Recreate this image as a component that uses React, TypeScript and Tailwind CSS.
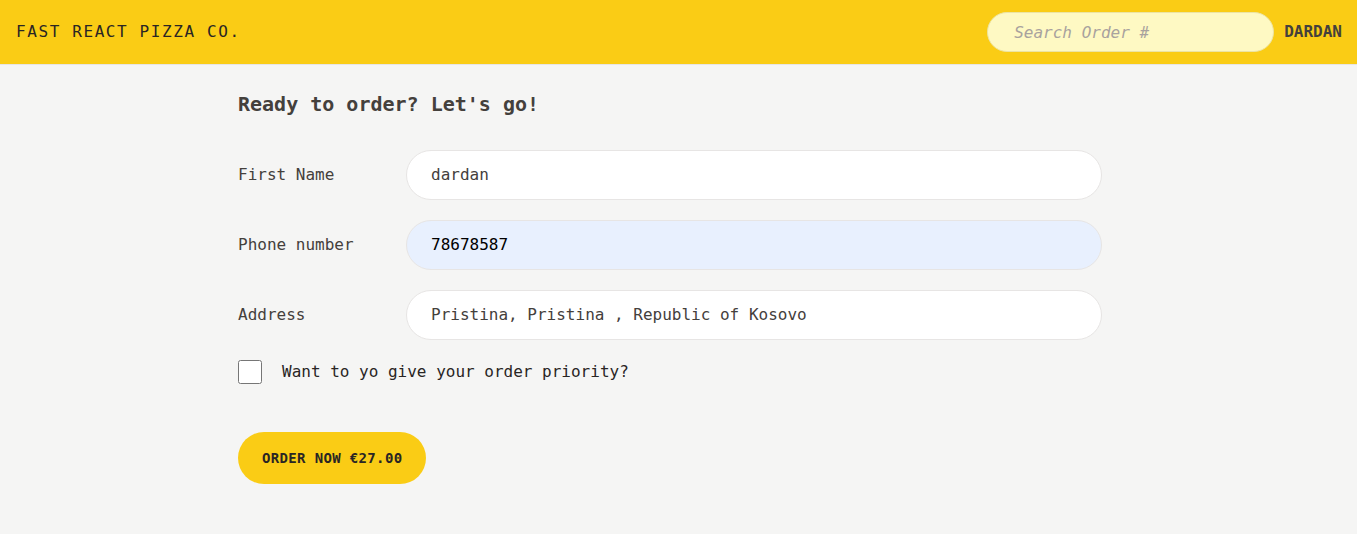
const mono = { fontFamily: '"DejaVu Sans Mono", "Liberation Mono", monospace' };

const Header = () => (
  <header className="flex items-center justify-between border-b border-stone-200 bg-[#facc15] pl-4 pr-[15px] py-3 uppercase">
    <a href="#" className="tracking-widest text-[#292524]">
      Fast React Pizza Co.
    </a>

    <div className="flex items-center gap-[10px]">
      <input
        type="text"
        placeholder="Search Order #"
        className="h-10 w-[287px] rounded-full border border-[#ece4a4] bg-[#fef9c3] pl-[26px] pr-6 text-base placeholder:italic placeholder:text-[#a8a29e] focus:outline-none"
      />
      <span className="text-base font-semibold text-[#44403c]">dardan</span>
    </div>
  </header>
);

const Field = ({ label, value, autofill = false }) => (
  <div className="mb-5 flex items-center gap-2">
    <label className="basis-40 shrink-0 text-base">{label}</label>
    <input
      type="text"
      defaultValue={value}
      className={`grow rounded-full border border-[#e7e5e4] px-6 py-3 text-base focus:outline-none ${
        autofill ? "bg-[#e8f0fe] text-black" : "bg-white text-[#44403c]"
      }`}
    />
  </div>
);

export default function App() {
  return (
    <div
      className="grid h-screen grid-rows-[auto_1fr] bg-[#f5f5f4] text-[#44403c]"
      style={mono}
    >
      <Header />

      <div className="overflow-y-auto pr-[17px]">
        <main className="mx-auto max-w-4xl px-4 pt-[25px] pb-6">
          <h2 className="mb-8 text-xl font-semibold text-[#44403c]">
            Ready to order? Let's go!
          </h2>

          {/* Form */}
          <form>
            <Field label="First Name" value="dardan" />
            <Field label="Phone number" value="78678587" autofill />
            <Field label="Address" value="Pristina, Pristina , Republic of Kosovo" />

            <div className="mb-12 flex items-center gap-5">
              <input
                type="checkbox"
                id="priority"
                className="h-6 w-6 accent-[#facc15]"
              />
              <label htmlFor="priority" className="text-base font-medium text-[#292524]">
                Want to yo give your order priority?
              </label>
            </div>

            <button
              type="button"
              className="inline-block rounded-full bg-[#facc15] px-6 py-4 text-sm font-semibold uppercase tracking-wide text-[#292524]"
            >
              Order now €27.00
            </button>
          </form>
        </main>
      </div>
    </div>
  );
}
